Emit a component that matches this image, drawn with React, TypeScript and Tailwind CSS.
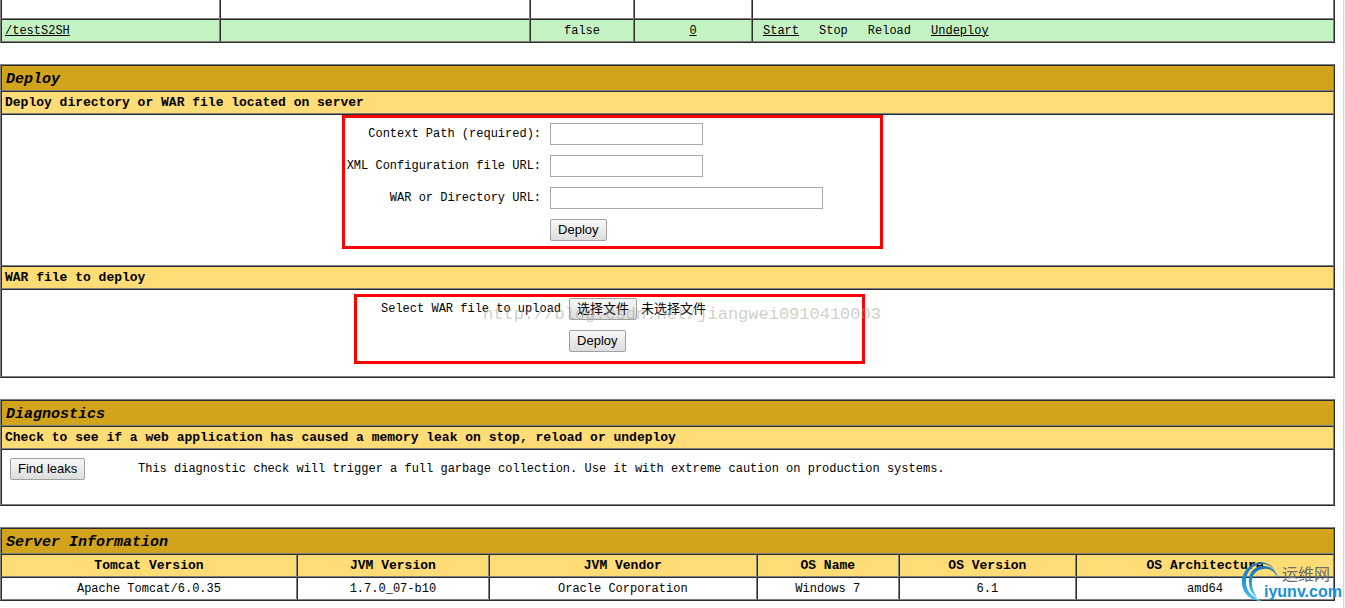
import { useRef, type ReactNode } from "react";

const tableClass =
  "w-full table-fixed border-separate border-spacing-0 border border-t-[#808080] border-l-[#808080] border-r-[#2c2c2c] border-b-[#2c2c2c]";
const cellBorder =
  "border border-t-[#2c2c2c] border-l-[#2c2c2c] border-r-[#808080] border-b-[#808080]";
const buttonClass =
  "h-[22px] rounded-[2px] border border-[#a0a0a0] bg-linear-to-b from-[#f8f8f8] to-[#dddddd] px-[7px] font-['Liberation_Sans','Noto_Sans_CJK_SC',sans-serif] text-[13px] leading-5 text-black whitespace-nowrap";
const inputClass = "h-[22px] border border-[#a9a9a9] bg-white px-1 outline-none";

function Title({ children, span = 1 }: { children: ReactNode; span?: number }) {
  return (
    <tr>
      <th
        colSpan={span}
        className={`${cellBorder} h-[26px] bg-[#d2a41c] px-1 pt-1 pb-0 text-left text-[15px] leading-5 font-bold italic`}
      >
        {children}
      </th>
    </tr>
  );
}

function Heading({ children }: { children: ReactNode }) {
  return (
    <tr>
      <th
        className={`${cellBorder} h-[23px] bg-[#ffdc75] px-[3px] text-left text-[13px] leading-5 font-bold`}
      >
        {children}
      </th>
    </tr>
  );
}

function Applications() {
  const cell = `${cellBorder} h-[23px] bg-[#c3f3c3] px-[3px] leading-5`;
  const blank = `${cellBorder} h-[19px] border-t-0 p-0`;
  return (
    <table className={`${tableClass} border-t-0`}>
      <colgroup>
        <col className="w-[16.43%]" />
        <col className="w-[23.26%]" />
        <col className="w-[7.8%]" />
        <col className="w-[8.85%]" />
        <col />
      </colgroup>
      <tbody>
        <tr>
          <td className={blank} />
          <td className={blank} />
          <td className={blank} />
          <td className={blank} />
          <td className={blank} />
        </tr>
        <tr>
          <td className={cell}>
            <a href="#app" className="underline">/testS2SH</a>
          </td>
          <td className={cell} />
          <td className={`${cell} text-center`}>false</td>
          <td className={`${cell} text-center`}>
            <a href="#sessions" className="underline">0</a>
          </td>
          <td className={cell}>
            <div className="flex gap-5 pl-[7px]">
              <a href="#start" className="underline">Start</a>
              <span>Stop</span>
              <span>Reload</span>
              <a href="#undeploy" className="underline">Undeploy</a>
            </div>
          </td>
        </tr>
      </tbody>
    </table>
  );
}

function Deploy() {
  const fileRef = useRef<HTMLInputElement>(null);
  return (
    <table className={tableClass}>
      <tbody>
        <Title>Deploy</Title>
        <Heading>Deploy directory or WAR file located on server</Heading>
        <tr>
          <td className={`${cellBorder} p-0 pb-4`}>
            <form
              onSubmit={(e) => e.preventDefault()}
              className="ml-[25.55%] grid w-[541px] grid-cols-[196px_1fr] items-center justify-items-start gap-x-[9px] gap-y-[10px] border-[3px] border-[#ff0000] py-[5px]"
            >
              <label htmlFor="path" className="justify-self-end whitespace-nowrap">Context Path (required):</label>
              <input id="path" type="text" className={`${inputClass} w-[153px]`} />
              <label htmlFor="config" className="justify-self-end whitespace-nowrap">XML Configuration file URL:</label>
              <input id="config" type="text" className={`${inputClass} w-[153px]`} />
              <label htmlFor="war" className="justify-self-end whitespace-nowrap">WAR or Directory URL:</label>
              <input id="war" type="text" className={`${inputClass} w-[273px]`} />
              <button type="submit" className={`${buttonClass} col-start-2`}>Deploy</button>
            </form>
          </td>
        </tr>
        <Heading>WAR file to deploy</Heading>
        <tr>
          <td className={`${cellBorder} p-0 pt-1 pb-3`}>
            <form
              onSubmit={(e) => e.preventDefault()}
              className="relative ml-[26.45%] grid w-[511px] grid-cols-[204px_1fr] items-center justify-items-start gap-x-2 gap-y-[10px] border-[3px] border-[#ff0000] pt-px pb-[9px]"
            >
              <label htmlFor="upload" className="justify-self-end whitespace-nowrap">Select WAR file to upload</label>
              <div className="flex items-center gap-1">
                <input id="upload" ref={fileRef} type="file" className="hidden" />
                <button type="button" onClick={() => fileRef.current?.click()} className={buttonClass}>
                  选择文件
                </button>
                <span className="font-['Liberation_Sans','Noto_Sans_CJK_SC',sans-serif] text-[13px] leading-5">未选择文件</span>
              </div>
              <button type="submit" className={`${buttonClass} col-start-2`}>Deploy</button>
              <span className="pointer-events-none absolute top-[6px] left-[126px] text-[17px] leading-6 whitespace-nowrap text-[#a0a090]/50">
                http://blog.csdn.net/jiangwei0910410003
              </span>
            </form>
          </td>
        </tr>
      </tbody>
    </table>
  );
}

function Diagnostics() {
  return (
    <table className={tableClass}>
      <tbody>
        <Title>Diagnostics</Title>
        <Heading>Check to see if a web application has caused a memory leak on stop, reload or undeploy</Heading>
        <tr>
          <td className={`${cellBorder} px-2 pt-2 pb-6`}>
            <div className="flex items-center">
              <div className="w-32">
                <button type="button" className={buttonClass}>Find leaks</button>
              </div>
              <span>
                This diagnostic check will trigger a full garbage collection. Use it with extreme caution on production systems.
              </span>
            </div>
          </td>
        </tr>
      </tbody>
    </table>
  );
}

const server = [
  ["Tomcat Version", "Apache Tomcat/6.0.35"],
  ["JVM Version", "1.7.0_07-b10"],
  ["JVM Vendor", "Oracle Corporation"],
  ["OS Name", "Windows 7"],
  ["OS Version", "6.1"],
  ["OS Architecture", "amd64"],
];

function ServerInformation() {
  return (
    <table className={tableClass}>
      <colgroup>
        <col className="w-[22.2%]" />
        <col className="w-[14.4%]" />
        <col className="w-[20.1%]" />
        <col className="w-[10.65%]" />
        <col className="w-[13.3%]" />
        <col />
      </colgroup>
      <tbody>
        <Title span={6}>Server Information</Title>
        <tr>
          {server.map(([name]) => (
            <th key={name} className={`${cellBorder} h-[23px] bg-[#ffdc75] p-0 text-[13px] leading-5 font-bold`}>
              {name}
            </th>
          ))}
        </tr>
        <tr>
          {server.map(([name, value]) => (
            <td key={name} className={`${cellBorder} h-[23px] p-0 text-center leading-5`}>
              {value}
            </td>
          ))}
        </tr>
      </tbody>
    </table>
  );
}

function Logo() {
  return (
    <svg
      viewBox="0 0 104 48"
      className="pointer-events-none absolute right-0 bottom-0 h-12 w-[104px]"
      aria-label="运维网 iyunv.com"
    >
      <defs>
        <linearGradient id="swirl" x1="0" y1="0" x2="0" y2="1">
          <stop offset="0" stopColor="#1c6fb4" />
          <stop offset="0.5" stopColor="#1c97dc" />
          <stop offset="1" stopColor="#4cc4f6" />
        </linearGradient>
      </defs>
      <path
        d="M35 12C30 3 21 0 13 4C4 8 0 16 1 24C2 34 10 41 21 41C11 37 5 31 5 22C5 14 9 7 16 5C23 2 30 5 35 12Z"
        fill="url(#swirl)"
      />
      <path
        d="M38 20C36 11 29 5 21 6C12 7 7 14 8 23C8 29 11 34 16 38C12 31 10 26 11 20C12 13 17 9 23 9C30 8 35 13 38 20Z"
        fill="url(#swirl)"
      />
      <text x="41" y="20" fontSize="16" fill="#6b6b6b" fontFamily="Noto Sans CJK SC, sans-serif">运维网</text>
      <text x="23" y="37" fontSize="16" fontWeight="bold" fill="#1a8fdc" fontFamily="Liberation Sans, sans-serif">iyunv.com</text>
    </svg>
  );
}

export default function App() {
  return (
    <div className="relative flex min-h-screen bg-white font-['Liberation_Mono','Noto_Sans_CJK_SC',monospace] text-[12px] leading-4 text-black">
      <main className="flex min-w-0 flex-1 flex-col gap-[21px] pr-2">
        <Applications />
        <Deploy />
        <Diagnostics />
        <ServerInformation />
      </main>
      <div className="w-[2px] border-l border-[#d4d4d4] bg-[#f2f2f2]" />
      <Logo />
    </div>
  );
}
